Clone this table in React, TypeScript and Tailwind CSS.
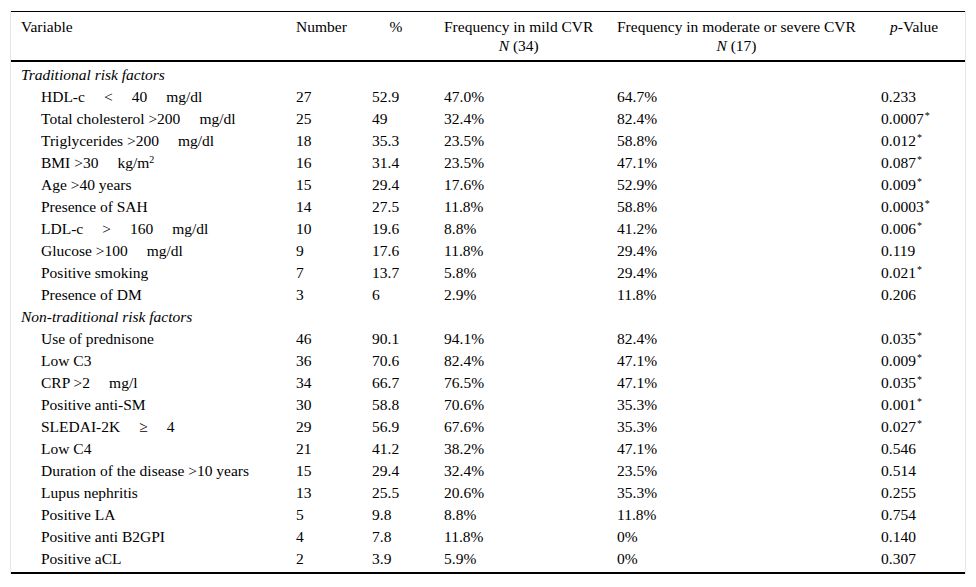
import React from 'react'

type Row = {
  label: React.ReactNode
  n: string
  pct: string
  mild: string
  mod: string
  p: string
  sig?: boolean
}

// wide gap used in the source between value and unit
const G = () => <span className="inline-block w-[19px]" />

const traditional: Row[] = [
  { label: <>HDL-c<G />&lt;<G />40<G />mg/dl</>, n: '27', pct: '52.9', mild: '47.0%', mod: '64.7%', p: '0.233' },
  { label: <>Total cholesterol &gt;200<G />mg/dl</>, n: '25', pct: '49', mild: '32.4%', mod: '82.4%', p: '0.0007', sig: true },
  { label: <>Triglycerides &gt;200<G />mg/dl</>, n: '18', pct: '35.3', mild: '23.5%', mod: '58.8%', p: '0.012', sig: true },
  { label: <>BMI &gt;30<G />kg/m<sup className="text-[10px]">2</sup></>, n: '16', pct: '31.4', mild: '23.5%', mod: '47.1%', p: '0.087', sig: true },
  { label: 'Age >40 years', n: '15', pct: '29.4', mild: '17.6%', mod: '52.9%', p: '0.009', sig: true },
  { label: 'Presence of SAH', n: '14', pct: '27.5', mild: '11.8%', mod: '58.8%', p: '0.0003', sig: true },
  { label: <>LDL-c<G />&gt;<G />160<G />mg/dl</>, n: '10', pct: '19.6', mild: '8.8%', mod: '41.2%', p: '0.006', sig: true },
  { label: <>Glucose &gt;100<G />mg/dl</>, n: '9', pct: '17.6', mild: '11.8%', mod: '29.4%', p: '0.119' },
  { label: 'Positive smoking', n: '7', pct: '13.7', mild: '5.8%', mod: '29.4%', p: '0.021', sig: true },
  { label: 'Presence of DM', n: '3', pct: '6', mild: '2.9%', mod: '11.8%', p: '0.206' },
]

const nonTraditional: Row[] = [
  { label: 'Use of prednisone', n: '46', pct: '90.1', mild: '94.1%', mod: '82.4%', p: '0.035', sig: true },
  { label: 'Low C3', n: '36', pct: '70.6', mild: '82.4%', mod: '47.1%', p: '0.009', sig: true },
  { label: <>CRP &gt;2<G />mg/l</>, n: '34', pct: '66.7', mild: '76.5%', mod: '47.1%', p: '0.035', sig: true },
  { label: 'Positive anti-SM', n: '30', pct: '58.8', mild: '70.6%', mod: '35.3%', p: '0.001', sig: true },
  { label: <>SLEDAI-2K<G />≥<G />4</>, n: '29', pct: '56.9', mild: '67.6%', mod: '35.3%', p: '0.027', sig: true },
  { label: 'Low C4', n: '21', pct: '41.2', mild: '38.2%', mod: '47.1%', p: '0.546' },
  { label: 'Duration of the disease >10 years', n: '15', pct: '29.4', mild: '32.4%', mod: '23.5%', p: '0.514' },
  { label: 'Lupus nephritis', n: '13', pct: '25.5', mild: '20.6%', mod: '35.3%', p: '0.255' },
  { label: 'Positive LA', n: '5', pct: '9.8', mild: '8.8%', mod: '11.8%', p: '0.754' },
  { label: 'Positive anti B2GPI', n: '4', pct: '7.8', mild: '11.8%', mod: '0%', p: '0.140' },
  { label: 'Positive aCL', n: '2', pct: '3.9', mild: '5.9%', mod: '0%', p: '0.307' },
]

const cols = 'grid grid-cols-[275px_76px_72px_173px_264px_94px]'

function DataRow({ r }: { r: Row }) {
  return (
    <div className={cols + ' h-[22px] leading-[22px] whitespace-nowrap'}>
      <div className="pl-[30px]">{r.label}</div>
      <div className="pl-[10px]">{r.n}</div>
      <div className="pl-[10px]">{r.pct}</div>
      <div className="pl-[10px]">{r.mild}</div>
      <div className="pl-[10px]">{r.mod}</div>
      <div className="pl-[10px]">
        {r.p}
        {r.sig && <sup className="text-[10px] ml-[1px]">*</sup>}
      </div>
    </div>
  )
}

function Section({ title, rows }: { title: string; rows: Row[] }) {
  return (
    <>
      <div className="h-[22px] leading-[22px] pl-[10px] italic">{title}</div>
      {rows.map((r, i) => (
        <DataRow key={i} r={r} />
      ))}
    </>
  )
}

export default function App() {
  return (
    <div
      className="min-h-screen bg-white pt-[11px] pl-[10px] text-[15.5px] text-black"
      style={{ fontFamily: '"Liberation Serif", "Times New Roman", serif' }}
    >
      <div className="w-[956px] border-x border-[#e6e6e6]">
        <div className="border-t border-black">
          <div className={cols + ' h-[50px] pt-[5px] leading-[19px] border-b-2 border-black whitespace-nowrap'}>
            <div className="pl-[10px]">Variable</div>
            <div className="pl-[10px]">Number</div>
            <div className="pl-[10px] pr-[14px] text-center">%</div>
            <div className="pl-[10px]">
              <div className="inline-block text-center">
                Frequency in mild CVR
                <br />
                <i>N</i> (34)
              </div>
            </div>
            <div className="pl-[10px]">
              <div className="inline-block text-center">
                Frequency in moderate or severe CVR
                <br />
                <i>N</i> (17)
              </div>
            </div>
            <div className="pl-[19px]">
              <i>p</i>-Value
            </div>
          </div>
          <div className="pt-[2px] pb-[2px] border-b-2 border-black">
            <Section title="Traditional risk factors" rows={traditional} />
            <Section title="Non-traditional risk factors" rows={nonTraditional} />
          </div>
        </div>
      </div>
    </div>
  )
}
